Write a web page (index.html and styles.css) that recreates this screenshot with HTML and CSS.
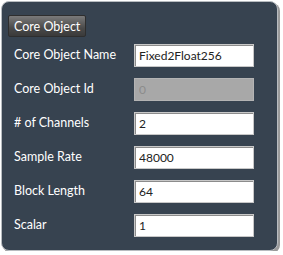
FILE: index.html
```html
<!DOCTYPE html>
<html lang="en">
<head>
    <meta charset="UTF-8">
    <title>Core Object</title>
    <link rel="stylesheet" href="styles.css">
</head>
<body>
    <div class="Panel">
        <div class="PanelHeader">Core Object</div>
        <div class="PanelGrid">
            <span class="FieldLabel">Core Object Name</span>
            <input class="FieldInput" type="text" value="Fixed2Float256" />

            <span class="FieldLabel">Core Object Id</span>
            <input class="FieldInput ReadOnly" type="text" value="0" disabled />

            <span class="FieldLabel"># of Channels</span>
            <input class="FieldInput" type="text" value="2" />

            <span class="FieldLabel">Sample Rate</span>
            <input class="FieldInput" type="text" value="48000" />

            <span class="FieldLabel">Block Length</span>
            <input class="FieldInput" type="text" value="64" />

            <span class="FieldLabel">Scalar</span>
            <input class="FieldInput" type="text" value="1" />
        </div>
    </div>
</body>
</html>
```
FILE: styles.css
```css
body {
    margin: 0;
    background-color: #FFFFFF;
    font-family: Lato, "Noto Sans", sans-serif;
    font-size: 12px;
}

/* Painel principal */
.Panel {
    width: 277px;
    height: 250px;
    margin: 1px 0 0 1px;
    box-sizing: border-box;
    background-color: #374350;
    border: solid 1px #B8BCC0;
    border-radius: 8px;
    box-shadow: 2px 2px 0 #9A9A9A;
    padding: 12px 0 0 6px;
}

.PanelHeader {
    display: inline-block;
    white-space: nowrap;
    height: 22px;
    line-height: 21px;
    padding: 0 5px;
    margin-top: 1px;
    box-sizing: border-box;
    color: #FFFFFF;
    font-size: 12.5px;
    background: linear-gradient(#7A7A7A, #4A4A4A 60%, #3A3A3A);
    border: solid 1px #2E2E2E;
    border-radius: 2px;
}

.PanelGrid {
    display: grid;
    grid-template-columns: 120px 120px;
    grid-auto-rows: 23px;
    row-gap: 11px;
    margin-top: 7px;
    padding-left: 6px;
    align-items: center;
}

.FieldLabel {
    color: #FFFFFF;
    font-size: 12.5px;
    margin-top: -3px;
}

.FieldInput {
    width: 120px;
    height: 23px;
    box-sizing: border-box;
    margin: 0;
    padding: 0 4px;
    border: solid 1px #C8C8C8;
    box-shadow: inset 1px 1px 0 #8C8C8C;
    background-color: #FFFFFF;
    color: #222222;
    font-family: Lato, "Noto Sans", sans-serif;
    font-size: 12px;
    outline: none;
}

.FieldInput.ReadOnly {
    background-color: #A8A8A8;
    border-color: #B4B4B4;
    box-shadow: none;
    color: #8C8C8C;
}
```
